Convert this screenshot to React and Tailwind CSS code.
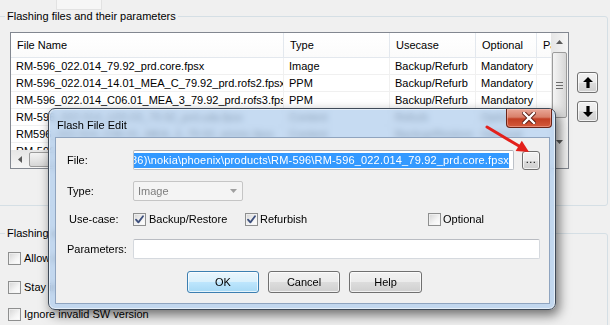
import React from "react";

const rows = [
  ["RM-596_022.014_79.92_prd.core.fpsx", "Image", "Backup/Refurb", "Mandatory"],
  ["RM-596_022.014_14.01_MEA_C_79.92_prd.rofs2.fpsx", "PPM", "Backup/Refurb", "Mandatory"],
  ["RM-596_022.014_C06.01_MEA_3_79.92_prd.rofs3.fpsx", "PPM", "Backup/Refurb", "Mandatory"],
  ["RM-596_022.014_U20.03_79.92_prd.uda.fpsx", "Content", "Refurb", "Optional"],
  ["RM596_022.014_C06.01_MEA_3_79.92_emmc.fpsx", "Content", "Backup/Restore", "Optional"],
  ["RM-596_022.014_79.92_prd.dcp", "Content", "Backup/Refurb", "Optional"],
];

function Check({ checked }) {
  return (
    <span className="relative block w-[13px] h-[13px] shrink-0 border border-[#8e8f8f] bg-[linear-gradient(135deg,#d4d4d4,#f4f4f4_60%,#ffffff)]">
      <span className="absolute inset-0 border border-[#f4f4f4]/70" />
      {checked && (
        <svg className="absolute left-[1px] top-[1px]" width="9" height="9" viewBox="0 0 9 9">
          <path d="M1 4.6 L3.4 7.4 L8 1.2" fill="none" stroke="#3d4f7c" strokeWidth="1.8" strokeLinecap="round" strokeLinejoin="round" />
        </svg>
      )}
    </span>
  );
}

function WinButton({ children, className, isDefault }) {
  return (
    <div
      className={
        isDefault
          ? "flex items-center justify-center rounded-[3px] border border-[#3c7fb1] bg-[linear-gradient(to_bottom,#eaf6fd_0%,#d9f0fc_50%,#bee6fd_50%,#a7d9f5_100%)] shadow-[inset_0_0_0_1px_rgba(255,255,255,0.7)] " + className
          : "flex items-center justify-center rounded-[3px] border border-[#707070] bg-[linear-gradient(to_bottom,#f2f2f2_0%,#ebebeb_50%,#dddddd_50%,#cfcfcf_100%)] shadow-[inset_0_0_0_1px_rgba(255,255,255,0.7)] " + className
      }
    >
      {children}
    </div>
  );
}

function Cell({ w, children, header }) {
  return (
    <div
      className={
        header
          ? "h-full flex items-center pl-[6px] border-r border-[#e3e8ee] whitespace-nowrap overflow-hidden shrink-0"
          : "h-full flex items-center pl-[5px] border-r border-[#f0f0f0] whitespace-nowrap overflow-hidden shrink-0"
      }
      style={{ width: w }}
    >
      {children}
    </div>
  );
}

const widths = [273, 106, 86, 61, 40];

export default function App() {
  return (
    <div className="relative w-[610px] h-[325px] overflow-hidden bg-[#f0f0f0] font-['Liberation_Sans',Arial,sans-serif] text-[11px] leading-none text-black">
      <div className="ml-[56px] w-[46px] h-[10px] bg-[#f6f6f6] border border-t-0 border-[#e2e2e2]" />

      <fieldset className="-ml-[3px] w-[611px] h-[196px] border border-[#d5dfe5] rounded-[3px]">
        <legend className="ml-[7px] px-[2px] leading-[13px]">Flashing files and their parameters</legend>
        <div className="flex mt-[9px]">
          <div className="ml-[12px] w-[559px] h-[137px] border border-[#828790] bg-white flex flex-col">
            <div className="flex h-[117px]">
              <div className="w-[540px] h-full overflow-hidden">
                <div className="flex h-[25px] border-b border-[#e3e8ee] bg-[linear-gradient(to_bottom,#ffffff,#fbfbfb)]">
                  <Cell w={widths[0]} header>File Name</Cell>
                  <Cell w={widths[1]} header>Type</Cell>
                  <Cell w={widths[2]} header>Usecase</Cell>
                  <Cell w={widths[3]} header>Optional</Cell>
                  <Cell w={widths[4]} header>Parameters</Cell>
                </div>
                {rows.map((r, i) => (
                  <div key={i} className="flex h-[17px] border-b border-[#f0f0f0]">
                    <Cell w={widths[0]}>{r[0]}</Cell>
                    <Cell w={widths[1]}>{r[1]}</Cell>
                    <Cell w={widths[2]}>{r[2]}</Cell>
                    <Cell w={widths[3]}>{r[3]}</Cell>
                    <Cell w={widths[4]}></Cell>
                  </div>
                ))}
              </div>
              <div className="w-[17px] h-full bg-[linear-gradient(to_right,#e6e6e6,#f5f5f5)] flex flex-col items-center">
                <div className="h-[17px] w-full flex items-center justify-center">
                  <svg width="7" height="4" viewBox="0 0 7 4"><path d="M0 4 L3.5 0 L7 4 Z" fill="#5a5a5a" /></svg>
                </div>
                <div className="mt-[2px] w-[15px] h-[66px] rounded-[2px] border border-[#9b9b9b] bg-[linear-gradient(to_right,#f4f4f4,#e6e6e6_50%,#d6d6d6)] flex flex-col items-center justify-center gap-[2px]">
                  <div className="w-[7px] h-[1px] bg-[#6d6d6d]" />
                  <div className="w-[7px] h-[1px] bg-[#6d6d6d]" />
                  <div className="w-[7px] h-[1px] bg-[#6d6d6d]" />
                </div>
                <div className="flex-1" />
                <div className="h-[17px] w-full flex items-center justify-center">
                  <svg width="7" height="4" viewBox="0 0 7 4"><path d="M0 0 L3.5 4 L7 0 Z" fill="#5a5a5a" /></svg>
                </div>
              </div>
            </div>
            <div className="flex h-[18px]">
              <div className="w-[540px] h-full bg-[linear-gradient(to_bottom,#e6e6e6,#f5f5f5)] flex items-center">
                <div className="w-[17px] h-full flex items-center justify-center">
                  <svg width="4" height="7" viewBox="0 0 4 7"><path d="M4 0 L0 3.5 L4 7 Z" fill="#5a5a5a" /></svg>
                </div>
                <div className="ml-[1px] w-[300px] h-[15px] rounded-[2px] border border-[#9b9b9b] bg-[linear-gradient(to_bottom,#f4f4f4,#e6e6e6_50%,#d6d6d6)]" />
              </div>
              <div className="w-[17px] h-full bg-[#f0f0f0]" />
            </div>
          </div>
          <div className="ml-[8px] mt-[40px] flex flex-col gap-[8px]">
            <WinButton className="w-[21px] h-[21px]">
              <svg width="10" height="11" viewBox="0 0 10 11"><path d="M5 0 L10 5 L6.6 5 L6.6 11 L3.4 11 L3.4 5 L0 5 Z" fill="#000" /></svg>
            </WinButton>
            <WinButton className="w-[21px] h-[21px]">
              <svg width="10" height="11" viewBox="0 0 10 11"><path d="M5 11 L10 6 L6.6 6 L6.6 0 L3.4 0 L3.4 6 L0 6 Z" fill="#000" /></svg>
            </WinButton>
          </div>
        </div>
      </fieldset>

      <fieldset className="-ml-[3px] mt-[21px] w-[611px] h-[120px] border border-[#d5dfe5] rounded-[3px]">
        <legend className="ml-[7px] px-[2px] leading-[13px]">Flashing options</legend>
        <div className="ml-[10px] mt-[12px] flex items-center gap-[3px] h-[13px]">
          <Check />
          <span>Allow downgrade of SW version</span>
        </div>
        <div className="ml-[10px] mt-[16px] flex items-center gap-[3px] h-[13px]">
          <Check />
          <span>Stay in flash mode after flashing</span>
        </div>
        <div className="ml-[10px] mt-[14px] flex items-center gap-[3px] h-[13px]">
          <Check />
          <span>Ignore invalid SW version</span>
        </div>
      </fieldset>

      {/* Dialog */}
      <div className="absolute left-[48px] top-[108px] w-[508px] h-[202px] rounded-[7px] border border-[#3f4a58] bg-[#b3cfee]/75 backdrop-blur-[3px] shadow-[3px_5px_12px_rgba(0,0,0,0.55),inset_0_0_0_1px_rgba(255,255,255,0.55)]">
        <div className="h-[28px] pl-[8px] pt-[10px] leading-[12px] text-[11px]">Flash File Edit</div>
        <div className="absolute top-0 right-[3px] w-[46px] h-[19px] rounded-b-[4px] border border-t-0 border-[#6a2418] bg-[linear-gradient(to_bottom,#e9a797_0%,#d9806a_45%,#c23f24_55%,#d45a3c_100%)] shadow-[inset_0_0_0_1px_rgba(255,200,190,0.45)] flex items-center justify-center">
          <svg width="14" height="12" viewBox="0 0 14 12">
            <path d="M2 1 L12 11 M12 1 L2 11" stroke="#5a1c12" strokeWidth="4.2" strokeLinecap="square" />
            <path d="M2 1 L12 11 M12 1 L2 11" stroke="#ffffff" strokeWidth="2.4" strokeLinecap="square" />
          </svg>
        </div>
        <div className="ml-[6px] w-[495px] h-[167px] border border-[#8fa4bf] bg-[#f0f0f0] flex flex-col">
          {/* File row */}
          <div className="mt-[12px] h-[20px] flex items-center">
            <div className="w-[77px] pl-[11px]">File:</div>
            <div className="w-[381px] h-[20px] border border-[#bcc1c8] border-t-[#abadb3] rounded-[2px] bg-white flex items-center justify-end overflow-hidden pr-[4px]">
              <span className="whitespace-nowrap bg-[#3399ff] text-white leading-[15px] tracking-[0.18px]">C:\Program Files (x86)\nokia\phoenix\products\RM-596\RM-596_022.014_79.92_prd.core.fpsx</span>
            </div>
            <WinButton className="ml-[8px] w-[18px] h-[19px]">
              <span className="leading-none -mt-[1px] tracking-[0.5px]">...</span>
            </WinButton>
          </div>
          {/* Type row */}
          <div className="mt-[11px] h-[20px] flex items-center">
            <div className="w-[77px] pl-[11px]">Type:</div>
            <div className="w-[110px] h-[20px] rounded-[2px] border border-[#c5c5c5] bg-[#f4f4f4] flex items-center justify-between pl-[4px] pr-[5px] text-[#7d7d7d]">
              <span>Image</span>
              <svg width="7" height="4" viewBox="0 0 7 4"><path d="M0 0 L3.5 4 L7 0 Z" fill="#a0a0a0" /></svg>
            </div>
          </div>
          {/* Use-case row */}
          <div className="mt-[8px] h-[20px] flex items-center">
            <div className="w-[77px] pl-[13px]">Use-case:</div>
            <div className="w-[112px] flex items-center gap-[3px]">
              <Check checked />
              <span>Backup/Restore</span>
            </div>
            <div className="w-[183px] flex items-center gap-[2px]">
              <Check checked />
              <span>Refurbish</span>
            </div>
            <div className="flex items-center gap-[2px]">
              <Check />
              <span>Optional</span>
            </div>
          </div>
          {/* Parameters row */}
          <div className="mt-[10px] h-[20px] flex items-center">
            <div className="w-[77px] pl-[11px]">Parameters:</div>
            <div className="w-[407px] h-[20px] border border-[#d5d9de] border-t-[#b9bcc2] rounded-[2px] bg-white" />
          </div>
          {/* Buttons */}
          <div className="mt-[12px] ml-[131px] flex gap-[9px]">
            <WinButton isDefault className="w-[72px] h-[22px]">OK</WinButton>
            <WinButton className="w-[72px] h-[22px]">Cancel</WinButton>
            <WinButton className="w-[73px] h-[22px]">Help</WinButton>
          </div>
        </div>
      </div>

      {/* red annotation arrow */}
      <svg className="absolute left-0 top-0 pointer-events-none" width="610" height="325" viewBox="0 0 610 325">
        <line x1="487" y1="127" x2="519" y2="146" stroke="#e3201b" strokeWidth="3" strokeLinecap="round" />
        <polygon points="529,152 515.6,151.1 521.8,140.7" fill="#e3201b" />
      </svg>
    </div>
  );
}
